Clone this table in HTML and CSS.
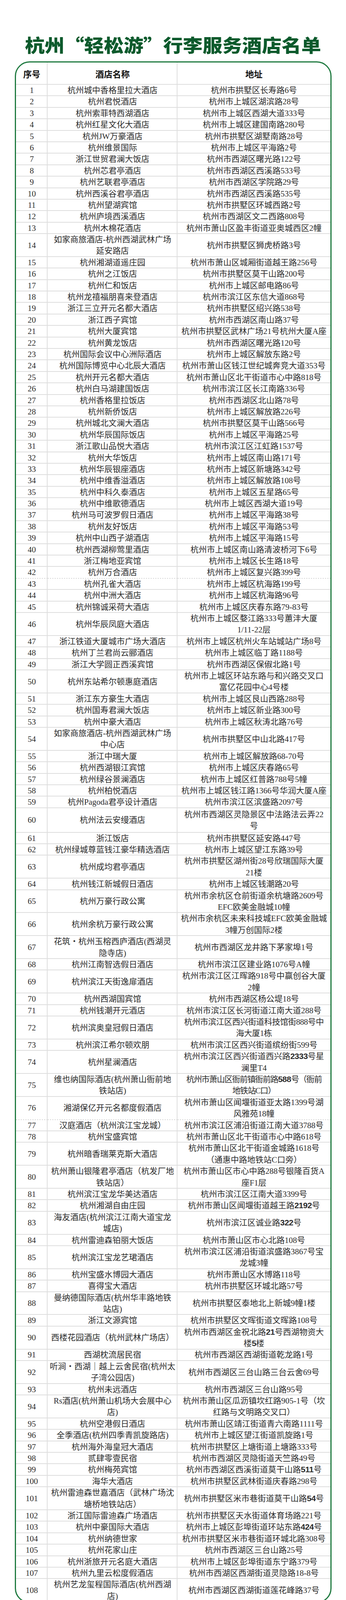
FILE: index.html
```html
<!DOCTYPE html>
<html lang="zh-CN">
<head>
<meta charset="utf-8">
<title>杭州“轻松游”行李服务酒店名单</title>
<link rel="stylesheet" href="styles.css">
</head>
<body>
<div class="page">
<h1 class="title">杭州“轻松游”行李服务酒店名单</h1>
<div class="box">
<div class="list">
<div class="tr head"><div class="td">序号</div><div class="td">酒店名称</div><div class="td">地址</div></div>
<div class="tr"><div class="td">1</div><div class="td">杭州城中香格里拉大酒店</div><div class="td">杭州市拱墅区长寿路6号</div></div>
<div class="tr"><div class="td">2</div><div class="td">杭州君悦酒店</div><div class="td">杭州市上城区湖滨路28号</div></div>
<div class="tr"><div class="td">3</div><div class="td">杭州索菲特西湖酒店</div><div class="td">杭州市上城区西湖大道333号</div></div>
<div class="tr"><div class="td">4</div><div class="td">杭州红星文化大酒店</div><div class="td">杭州市上城区建国南路280号</div></div>
<div class="tr"><div class="td">5</div><div class="td">杭州JW万豪酒店</div><div class="td">杭州市拱墅区湖墅南路28号</div></div>
<div class="tr"><div class="td">6</div><div class="td">杭州维景国际</div><div class="td">杭州市上城区平海路2号</div></div>
<div class="tr"><div class="td">7</div><div class="td">浙江世贸君澜大饭店</div><div class="td">杭州市西湖区曙光路122号</div></div>
<div class="tr"><div class="td">8</div><div class="td">杭州芯君亭酒店</div><div class="td">杭州市西湖区西溪路533号</div></div>
<div class="tr"><div class="td">9</div><div class="td">杭州艺联君亭酒店</div><div class="td">杭州市西湖区学院路29号</div></div>
<div class="tr"><div class="td">10</div><div class="td">杭州西溪谷君亭酒店</div><div class="td">杭州市西湖区西溪路535号</div></div>
<div class="tr"><div class="td">11</div><div class="td">杭州望湖宾馆</div><div class="td">杭州市拱墅区环城西路2号</div></div>
<div class="tr"><div class="td">12</div><div class="td">杭州庐境西溪酒店</div><div class="td">杭州市西湖区文二西路808号</div></div>
<div class="tr"><div class="td">13</div><div class="td">杭州木棉花酒店</div><div class="td">杭州市萧山区盈丰街道亚奥城西区2幢</div></div>
<div class="tr d"><div class="td">14</div><div class="td"><span class="ml">如家商旅酒店-杭州西湖武林广场<br>延安路店</span></div><div class="td">杭州市拱墅区狮虎桥路3号</div></div>
<div class="tr"><div class="td">15</div><div class="td">杭州湘湖道遥庄园</div><div class="td">杭州市萧山区城厢街道越王路256号</div></div>
<div class="tr"><div class="td">16</div><div class="td">杭州之江饭店</div><div class="td">杭州市拱墅区莫干山路200号</div></div>
<div class="tr"><div class="td">17</div><div class="td">杭州仁和饭店</div><div class="td">杭州市上城区邮电路86号</div></div>
<div class="tr"><div class="td">18</div><div class="td">杭州龙禧福朋喜来登酒店</div><div class="td">杭州市滨江区东信大道868号</div></div>
<div class="tr"><div class="td">19</div><div class="td">浙江三立开元名都大酒店</div><div class="td">杭州市拱墅区绍兴路538号</div></div>
<div class="tr"><div class="td">20</div><div class="td">浙江西子宾馆</div><div class="td">杭州市西湖区南山路37号</div></div>
<div class="tr"><div class="td">21</div><div class="td">杭州大厦宾馆</div><div class="td">杭州市拱墅区武林广场21号杭州大厦A座</div></div>
<div class="tr"><div class="td">22</div><div class="td">杭州黄龙饭店</div><div class="td">杭州市西湖区曙光路120号</div></div>
<div class="tr"><div class="td">23</div><div class="td">杭州国际会议中心洲际酒店</div><div class="td">杭州市上城区解放东路2号</div></div>
<div class="tr"><div class="td">24</div><div class="td">杭州国际博览中心北辰大酒店</div><div class="td">杭州市萧山区钱江世纪城奔竞大道353号</div></div>
<div class="tr"><div class="td">25</div><div class="td">杭州开元名都大酒店</div><div class="td">杭州市萧山区北干街道市心中路818号</div></div>
<div class="tr"><div class="td">26</div><div class="td">杭州白马湖建国饭店</div><div class="td">杭州市滨江区长江南路336号</div></div>
<div class="tr"><div class="td">27</div><div class="td">杭州香格里拉饭店</div><div class="td">杭州市西湖区北山路78号</div></div>
<div class="tr"><div class="td">28</div><div class="td">杭州新侨饭店</div><div class="td">杭州市上城区解放路226号</div></div>
<div class="tr"><div class="td">29</div><div class="td">杭州城北文澜大酒店</div><div class="td">杭州市拱墅区莫干山路566号</div></div>
<div class="tr"><div class="td">30</div><div class="td">杭州华辰国际饭店</div><div class="td">杭州市上城区平海路25号</div></div>
<div class="tr"><div class="td">31</div><div class="td">浙江歌山品悦大酒店</div><div class="td">杭州市滨江区江虹路1537号</div></div>
<div class="tr"><div class="td">32</div><div class="td">杭州大华饭店</div><div class="td">杭州市上城区南山路171号</div></div>
<div class="tr"><div class="td">33</div><div class="td">杭州华辰银座酒店</div><div class="td">杭州市上城区新塘路342号</div></div>
<div class="tr"><div class="td">34</div><div class="td">杭州中维香溢酒店</div><div class="td">杭州市上城区解放路108号</div></div>
<div class="tr"><div class="td">35</div><div class="td">杭州中科久泰酒店</div><div class="td">杭州市上城区五星路65号</div></div>
<div class="tr"><div class="td">36</div><div class="td">杭州中维歌德酒店</div><div class="td">杭州市上城区西湖大道19号</div></div>
<div class="tr"><div class="td">37</div><div class="td">杭州马可波罗假日酒店</div><div class="td">杭州市上城区平海路38号</div></div>
<div class="tr"><div class="td">38</div><div class="td">杭州友好饭店</div><div class="td">杭州市上城区平海路53号</div></div>
<div class="tr"><div class="td">39</div><div class="td">杭州中山西子湖酒店</div><div class="td">杭州市上城区平海路15号</div></div>
<div class="tr"><div class="td">40</div><div class="td">杭州西湖柳莺里酒店</div><div class="td">杭州市上城区南山路清波桥河下6号</div></div>
<div class="tr"><div class="td">41</div><div class="td">浙江梅地亚宾馆</div><div class="td">杭州市上城区长生路18号</div></div>
<div class="tr dash"><div class="td">42</div><div class="td">杭州万合酒店</div><div class="td">杭州市上城区复兴路399号</div></div>
<div class="tr"><div class="td">43</div><div class="td">杭州孔雀大酒店</div><div class="td">杭州市上城区杭海路199号</div></div>
<div class="tr"><div class="td">44</div><div class="td">杭州中洲大酒店</div><div class="td">杭州市上城区杭海路96号</div></div>
<div class="tr"><div class="td">45</div><div class="td">杭州锦诚采荷大酒店</div><div class="td">杭州市上城区庆春东路79-83号</div></div>
<div class="tr d"><div class="td">46</div><div class="td">杭州华辰凤庭大酒店</div><div class="td"><span class="ml">杭州市上城区婺江路333号蕙沣大厦<br>1/11-22层</span></div></div>
<div class="tr"><div class="td">47</div><div class="td">浙江铁道大厦城市广场大酒店</div><div class="td">杭州市上城区杭州火车站城站广场8号</div></div>
<div class="tr"><div class="td">48</div><div class="td">杭州丁兰君尚云郦酒店</div><div class="td">杭州市上城区临丁路1188号</div></div>
<div class="tr"><div class="td">49</div><div class="td">浙江大学圆正西溪宾馆</div><div class="td">杭州市西湖区保俶北路1号</div></div>
<div class="tr d"><div class="td">50</div><div class="td">杭州东站希尔顿惠庭酒店</div><div class="td"><span class="ml">杭州市上城区环站东路与和兴路交叉口<br>富亿花园中心4号楼</span></div></div>
<div class="tr"><div class="td">51</div><div class="td">浙江东方豪生大酒店</div><div class="td">杭州市上城区艮山西路288号</div></div>
<div class="tr"><div class="td">52</div><div class="td">杭州国寿君澜大饭店</div><div class="td">杭州市上城区新业路300号</div></div>
<div class="tr"><div class="td">53</div><div class="td">杭州中豪大酒店</div><div class="td">杭州市上城区秋涛北路76号</div></div>
<div class="tr d"><div class="td">54</div><div class="td"><span class="ml">如家商旅酒店-杭州西湖武林广场<br>中心店</span></div><div class="td">杭州市拱墅区中山北路417号</div></div>
<div class="tr"><div class="td">55</div><div class="td">浙江中瑞大厦</div><div class="td">杭州市上城区解放路68-70号</div></div>
<div class="tr"><div class="td">56</div><div class="td">杭州西湖银江宾馆</div><div class="td">杭州市上城区庆春路65号</div></div>
<div class="tr"><div class="td">57</div><div class="td">杭州绿谷景澜酒店</div><div class="td">杭州市上城区红普路788号5幢</div></div>
<div class="tr"><div class="td">58</div><div class="td">杭州柏悦酒店</div><div class="td">杭州市上城区钱江路1366号华润大厦A座</div></div>
<div class="tr"><div class="td">59</div><div class="td">杭州Pagoda君亭设计酒店</div><div class="td">杭州市滨江区滨盛路2097号</div></div>
<div class="tr r60"><div class="td">60</div><div class="td">杭州法云安缦酒店</div><div class="td"><span class="ml">杭州市西湖区灵隐景区中法路法云弄22<br>号</span></div></div>
<div class="tr"><div class="td">61</div><div class="td">浙江饭店</div><div class="td">杭州市拱墅区延安路447号</div></div>
<div class="tr"><div class="td">62</div><div class="td">杭州绿城尊蓝钱江豪华精选酒店</div><div class="td">杭州市上城区望江东路39号</div></div>
<div class="tr d"><div class="td">63</div><div class="td">杭州成均君亭酒店</div><div class="td"><span class="ml">杭州市拱墅区湖州街28号欣瑞国际大厦<br>21楼</span></div></div>
<div class="tr"><div class="td">64</div><div class="td">杭州钱江新城假日酒店</div><div class="td">杭州市上城区钱潮路20号</div></div>
<div class="tr d"><div class="td">65</div><div class="td">杭州万豪行政公寓</div><div class="td"><span class="ml">杭州市余杭区仓前街道余杭塘路2609号<br>EFC欧美金融城10幢</span></div></div>
<div class="tr d"><div class="td">66</div><div class="td">杭州余杭万豪行政公寓</div><div class="td"><span class="ml">杭州市余杭区未来科技城EFC欧美金融城<br>3幢万创国际2楼</span></div></div>
<div class="tr d"><div class="td">67</div><div class="td"><span class="ml">花筑・杭州玉榕西庐酒店(西湖灵<br>隐寺店)</span></div><div class="td">杭州市西湖区龙井路下茅家埠1号</div></div>
<div class="tr"><div class="td">68</div><div class="td">杭州江南智选假日酒店</div><div class="td">杭州市滨江区建业路1076号A幢</div></div>
<div class="tr d"><div class="td">69</div><div class="td">杭州滨江天街逸扉酒店</div><div class="td"><span class="ml">杭州市滨江区江晖路918号中赢创谷大厦<br>2幢</span></div></div>
<div class="tr"><div class="td">70</div><div class="td">杭州西湖国宾馆</div><div class="td">杭州市西湖区杨公堤18号</div></div>
<div class="tr"><div class="td">71</div><div class="td">杭州钱潮开元酒店</div><div class="td">杭州市滨江区长河街道江南大道288号</div></div>
<div class="tr d"><div class="td">72</div><div class="td">杭州滨奥皇冠假日酒店</div><div class="td tight"><span class="ml">杭州市滨江区西兴街道科技馆街888号中<br>海大厦1栋</span></div></div>
<div class="tr"><div class="td">73</div><div class="td">杭州滨江希尔顿欢朋</div><div class="td">杭州市滨江区西兴街道缤纷街599号</div></div>
<div class="tr d"><div class="td">74</div><div class="td">杭州星澜酒店</div><div class="td"><span class="ml">杭州市滨江区西兴街道西兴路<b class="bd">2333</b>号星<br>澜里T4</span></div></div>
<div class="tr d"><div class="td">75</div><div class="td"><span class="ml">维也纳国际酒店(杭州萧山衙前地<br>铁站店)</span></div><div class="td tighter"><span class="ml">杭州市萧山区衙前镇衙前路<b class="bd">588</b>号（衙前<br>地铁站C口）</span></div></div>
<div class="tr d dash"><div class="td">76</div><div class="td">湘湖保亿开元名都度假酒店</div><div class="td"><span class="ml">杭州市萧山区闻堰街道亚太路1399号湖<br>风雅苑18幢</span></div></div>
<div class="tr"><div class="td">77</div><div class="td">汉庭酒店（杭州滨江宝龙城）</div><div class="td">杭州市滨江区浦沿街道江南大道3788号</div></div>
<div class="tr"><div class="td">78</div><div class="td">杭州宝盛宾馆</div><div class="td">杭州市萧山区北干街道市心中路618号</div></div>
<div class="tr d"><div class="td">79</div><div class="td">杭州暗香瑞莱克斯大酒店</div><div class="td"><span class="ml">杭州市萧山区北干街道金城路1618号<br>（通惠中路地铁站C口旁）</span></div></div>
<div class="tr d"><div class="td">80</div><div class="td"><span class="ml">杭州萧山银隆君亭酒店（杭发厂地<br>铁站店）</span></div><div class="td"><span class="ml">杭州市萧山区市心中路288号银隆百货A<br>座F1层</span></div></div>
<div class="tr"><div class="td">81</div><div class="td">杭州滨江宝龙华美达酒店</div><div class="td">杭州市滨江区江南大道3399号</div></div>
<div class="tr"><div class="td">82</div><div class="td">杭州湘湖自由庄园</div><div class="td"><span class="ml">杭州市萧山区闻堰街道越王路<b class="bd">2192</b>号</span></div></div>
<div class="tr d"><div class="td">83</div><div class="td"><span class="ml">海友酒店(杭州滨江江南大道宝龙<br>城店)</span></div><div class="td"><span class="ml">杭州市滨江区诚业路<b class="bd">322</b>号</span></div></div>
<div class="tr"><div class="td">84</div><div class="td">杭州雷迪森铂丽大饭店</div><div class="td">杭州市萧山区市心北路108号</div></div>
<div class="tr d"><div class="td">85</div><div class="td">杭州滨江宝龙艺珺酒店</div><div class="td"><span class="ml">杭州市滨江区浦沿街道滨盛路3867号宝<br>龙城3幢</span></div></div>
<div class="tr"><div class="td">86</div><div class="td">杭州宝盛水博园大酒店</div><div class="td">杭州市萧山区水博路118号</div></div>
<div class="tr"><div class="td">87</div><div class="td">喜得宝大酒店</div><div class="td">杭州市拱墅区环城北路57号</div></div>
<div class="tr d"><div class="td">88</div><div class="td"><span class="ml">曼纳德国际酒店(杭州华丰路地铁<br>站店)</span></div><div class="td">杭州市拱墅区泰地北上新城9幢1楼</div></div>
<div class="tr"><div class="td">89</div><div class="td">浙江文源宾馆</div><div class="td">杭州市拱墅区文晖街道文晖路108号</div></div>
<div class="tr d"><div class="td">90</div><div class="td">西楼花园酒店（杭州武林广场店）</div><div class="td"><span class="ml">杭州市西湖区金祝北路<b class="bd">21</b>号西湖物资大<br>楼<b class="bd">5</b>楼</span></div></div>
<div class="tr"><div class="td">91</div><div class="td">西湖枕流居民宿</div><div class="td">杭州市西湖区西湖街道乾龙路1号</div></div>
<div class="tr d"><div class="td">92</div><div class="td"><span class="ml">听涧・西湖｜越上云舍民宿(杭州太<br>子湾公园店)</span></div><div class="td">杭州市西湖区三台山路三台云舍69号</div></div>
<div class="tr"><div class="td">93</div><div class="td">杭州未远酒店</div><div class="td">杭州市西湖区三台山路95号</div></div>
<div class="tr d"><div class="td">94</div><div class="td"><span class="ml">Rs酒店(杭州萧山机场大会展中心<br>店)</span></div><div class="td"><span class="ml">杭州市萧山区瓜沥镇坎红路905-1号（坎<br>红路与文明路交叉口）</span></div></div>
<div class="tr"><div class="td">95</div><div class="td">杭州空港假日酒店</div><div class="td">杭州市萧山区靖江街道青六南路1111号</div></div>
<div class="tr"><div class="td">96</div><div class="td">全季酒店(杭州四季青凯旋路店)</div><div class="td">杭州市上城区望江街道凯旋路1号</div></div>
<div class="tr"><div class="td">97</div><div class="td">杭州海外海皇冠大酒店</div><div class="td">杭州市拱墅区上塘街道上塘路333号</div></div>
<div class="tr"><div class="td">98</div><div class="td">贰肆零壹民宿</div><div class="td">杭州市西湖区灵隐街道天竺路49号</div></div>
<div class="tr"><div class="td">99</div><div class="td">杭州梅苑宾馆</div><div class="td"><span class="ml">杭州市西湖区西溪街道莫干山路<b class="bd">511</b>号</span></div></div>
<div class="tr"><div class="td">100</div><div class="td">海华大酒店</div><div class="td">杭州市拱墅区武林街道庆春路298号</div></div>
<div class="tr d"><div class="td">101</div><div class="td"><span class="ml">杭州雷迪森世嘉酒店（武林广场沈<br>塘桥地铁站店）</span></div><div class="td"><span class="ml">杭州市拱墅区米市巷街道莫干山路<b class="bd">54</b>号</span></div></div>
<div class="tr"><div class="td">102</div><div class="td">浙江国际雷迪森广场酒店</div><div class="td">杭州市拱墅区天水街道体育场路221号</div></div>
<div class="tr"><div class="td">103</div><div class="td">杭州中豪国际大酒店</div><div class="td"><span class="ml">杭州市上城区彭埠街道环站东路<b class="bd">424</b>号</span></div></div>
<div class="tr"><div class="td">104</div><div class="td">杭州纳德世家</div><div class="td">杭州市拱墅区米市巷街道环城北路308号</div></div>
<div class="tr"><div class="td">105</div><div class="td">杭州花家山庄</div><div class="td">杭州市西湖区三台山路25号</div></div>
<div class="tr"><div class="td">106</div><div class="td">杭州浙旅开元名庭大酒店</div><div class="td">杭州市上城区彭埠街道东宁路379号</div></div>
<div class="tr"><div class="td">107</div><div class="td">杭州九里云松度假酒店</div><div class="td">杭州市西湖区西湖街道灵隐路18-8号</div></div>
<div class="tr d last"><div class="td">108</div><div class="td"><span class="ml">杭州艺龙玺程国际酒店(杭州西湖<br>店)</span></div><div class="td">杭州市西湖区西湖街道莲花峰路37号</div></div>
</div>
</div>
</div>
</body>
</html>
```

FILE: styles.css
```css
* { box-sizing: border-box; }
html, body { margin: 0; background: #ffffff; }
body {
  font-family: "Liberation Serif", "Noto Sans CJK SC", serif;
  color: #2b2b2b;
}
.page { padding-top: 84px; }
.title {
  margin: 0;
  text-align: center;
  font-family: "Noto Sans CJK SC", sans-serif;
  font-weight: 900;
  font-size: 46px;
  line-height: 58px;
  height: 58px;
  color: #0c5a2c;
  transform: scaleX(1.1);
  font-feature-settings: "fwid" 1;
}
.box {
  margin: 15px 37px 0 38px;
  border: 3px solid #1f7a40;
  border-radius: 38px;
  overflow: hidden;
}
.list { display: flex; flex-direction: column; }
.tr {
  display: grid;
  grid-template-columns: 81px 333px 1fr;
  height: 29.4px;
  flex: none;
}
.tr.d { height: 58.8px; }
.tr.r60 { height: 63px; }
.tr.head { height: 57px; }
.td {
  display: flex;
  align-items: center;
  justify-content: center;
  text-align: center;
  white-space: nowrap;
  font-size: 21px;
  line-height: 29.4px;
  box-shadow: inset 0 -2px 0 #dedede;
}
.td:not(:last-child) { box-shadow: inset 0 -2px 0 #dedede, inset -2px 0 0 #dedede; }
.ml { display: block; }
.head .td {
  font-family: "Noto Sans CJK SC", sans-serif;
  font-weight: 700;
  font-size: 22px;
  color: #111111;
}
.dash .td {
  box-shadow: none;
  background: linear-gradient(to right, #b5b5b5 50%, transparent 50%) left bottom / 6px 1px repeat-x;
}
.dash .td:not(:last-child) { box-shadow: inset -2px 0 0 #dedede; }
.last .td { box-shadow: none; }
.last .td:not(:last-child) { box-shadow: inset -2px 0 0 #dedede; }
.tight { letter-spacing: -0.5px; }
.tighter { letter-spacing: -1.4px; }
.bd {
  font-family: "Liberation Sans", "Noto Sans CJK SC", sans-serif;
  font-weight: 700;
  letter-spacing: -0.5px;
  line-height: 1;
}
```
